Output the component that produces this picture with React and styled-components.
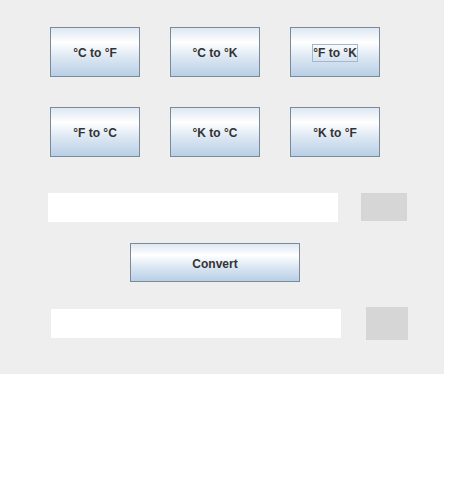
import React from "react";
import styled, { createGlobalStyle } from "styled-components";

const Global = createGlobalStyle`
  html, body { margin: 0; padding: 0; background: #ffffff; }
  body { font-family: "Liberation Sans", Arial, sans-serif; }
`;

const Panel = styled.div`
  width: 444px;
  height: 374px;
  background: #eeeeee;
  box-sizing: border-box;
  padding-top: 27px;
  display: flex;
  flex-direction: column;
`;

const ButtonRow = styled.div`
  display: flex;
  gap: 30px;
  padding-left: 50px;
  margin-bottom: ${(p) => p.$mb || 0}px;
`;

const SwingButton = styled.button`
  box-sizing: border-box;
  width: ${(p) => p.$w || 90}px;
  height: ${(p) => p.$h || 50}px;
  border: 1px solid #7a8a99;
  border-radius: 0;
  padding: 2px 0 0 0;
  margin: 0;
  background: linear-gradient(
    to bottom,
    #dde8f3 0%,
    #ffffff 30%,
    #dde8f3 60%,
    #b8cfe5 100%
  );
  color: #333333;
  font-family: "Liberation Sans", Arial, sans-serif;
  font-weight: bold;
  font-size: 12px;
  display: flex;
  align-items: center;
  justify-content: center;
  cursor: pointer;
  outline: none;
`;

const Focus = styled.span`
  border: 1px solid #a3b8cc;
  padding: 1px 0px 1px 0px;
  line-height: 14px;
`;

const FieldRow = styled.div`
  display: flex;
  align-items: flex-start;
  padding-left: ${(p) => p.$pl}px;
  margin-top: ${(p) => p.$mt}px;
`;

const TextField = styled.div`
  width: 290px;
  height: ${(p) => p.$h}px;
  background: #ffffff;
  margin-top: ${(p) => p.$mt || 0}px;
`;

const Swatch = styled.div`
  width: ${(p) => p.$w}px;
  height: ${(p) => p.$h}px;
  background: #d6d6d6;
  margin-left: ${(p) => p.$ml}px;
`;

const CenterRow = styled.div`
  display: flex;
  padding-left: 130px;
  margin-top: 21px;
`;

export default function App() {
  return (
    <>
      <Global />
      <Panel>
        <ButtonRow $mb={30}>
          <SwingButton>°C to °F</SwingButton>
          <SwingButton>°C to °K</SwingButton>
          <SwingButton>
            <Focus>°F to °K</Focus>
          </SwingButton>
        </ButtonRow>
        <ButtonRow>
          <SwingButton>°F to °C</SwingButton>
          <SwingButton>°K to °C</SwingButton>
          <SwingButton>°K to °F</SwingButton>
        </ButtonRow>
        <FieldRow $pl={48} $mt={36}>
          <TextField $h={29} />
          <Swatch $w={46} $h={28} $ml={23} />
        </FieldRow>
        <CenterRow>
          <SwingButton $w={170} $h={39}>Convert</SwingButton>
        </CenterRow>
        <FieldRow $pl={51} $mt={25}>
          <TextField $h={29} $mt={2} />
          <Swatch $w={42} $h={33} $ml={25} />
        </FieldRow>
      </Panel>
    </>
  );
}
